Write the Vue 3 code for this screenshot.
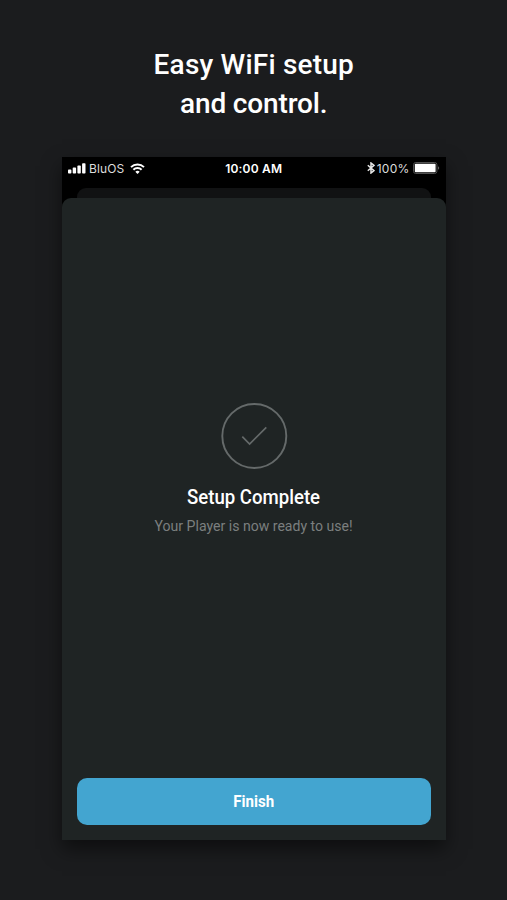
<script setup>
const signalBars = [
  { x: 0, h: 4 },
  { x: 4.7, h: 6 },
  { x: 9.4, h: 8 },
  { x: 14.1, h: 10.4 },
]
</script>

<template>
  <main class="page">
    <h1 class="headline">
      <span class="headline-top">Easy WiFi setup</span>
      <span class="headline-bottom">and control.</span>
    </h1>

    <section class="phone">
      <header class="status">
        <div class="status-side">
          <svg class="signal" width="18" height="11" viewBox="0 0 18 11" fill="#fff">
            <rect v-for="bar in signalBars" :key="bar.x" :x="bar.x" :y="10.6 - bar.h" width="3.4" :height="bar.h" rx="0.8" />
          </svg>
          <span class="carrier">BluOS</span>
          <svg class="wifi" width="15" height="11" viewBox="0 0 15 11" fill="none" stroke="#fff" stroke-width="2">
            <path d="M1 4.1a9.3 9.3 0 0 1 13 0" />
            <path d="M3.4 6.7a5.9 5.9 0 0 1 8.2 0" />
            <path d="M7.5 11 5.3 8.8a3.1 3.1 0 0 1 4.4 0z" fill="#fff" stroke="none" />
          </svg>
        </div>
        <span class="clock">10:00 AM</span>
        <div class="status-side right">
          <svg class="bluetooth" width="8" height="12" viewBox="0 0 8 12" fill="none" stroke="#e8e8e8" stroke-width="1.5">
            <path d="M0.8 3.3 7 8.6 4 11V1l3 2.4L0.8 8.7" />
          </svg>
          <span class="percent">100%</span>
          <svg class="battery" width="27" height="12" viewBox="0 0 27 12">
            <rect x="0.5" y="0.5" width="23.4" height="11" rx="2.2" fill="none" stroke="#505050" />
            <rect x="1.8" y="1.8" width="20.8" height="8.4" rx="0.8" fill="#fff" />
            <path d="M25 4.2c1.6.6 1.6 3 0 3.6z" fill="#606060" />
          </svg>
        </div>
      </header>

      <div class="back-sheet"></div>
      <div class="sheet">
        <div class="message">
          <svg class="check" width="66" height="66" viewBox="0 0 66 66" fill="none" stroke="#656a6a">
            <circle cx="33.3" cy="33" r="32" stroke-width="1.9" />
            <path d="m21.3 33.6 7.3 7.4L45.3 24.3" stroke-width="1.7" />
          </svg>
          <h2>Setup Complete</h2>
          <p>Your Player is now ready to use!</p>
        </div>
        <button class="finish" type="button"><span>Finish</span></button>
      </div>
    </section>
  </main>
</template>

<style>
body {
  background: #1b1c1e;
}
</style>

<style scoped>
.page {
  box-sizing: border-box;
  height: 900px;
  padding: 45px 61.5px 0 62px;
  overflow: hidden;
  background: #1b1c1e;
  font-family: Roboto, "Liberation Sans", sans-serif;
}
.headline {
  display: flex;
  flex-direction: column;
  align-items: center;
  height: 112px;
  margin: 0;
  color: #fff;
  font-size: 28px;
  line-height: 39px;
  font-weight: 500;
  white-space: nowrap;
}
.headline-top {
  letter-spacing: 0.2px;
}
.headline-bottom {
  letter-spacing: -0.15px;
}
.phone {
  display: flex;
  flex-direction: column;
  height: 683px;
  background: #000;
  box-shadow: 0 9px 18px rgba(0, 0, 0, 0.5);
}
.status {
  display: grid;
  grid-template-columns: 1fr auto 1fr;
  align-items: center;
  flex: none;
  height: 22px;
  margin-bottom: 9px;
  padding: 0 6px;
  color: #fff;
  font-family: Inter, "Liberation Sans", sans-serif;
  font-size: 12px;
}
.status-side {
  display: flex;
  align-items: center;
}
.right {
  justify-content: flex-end;
}
.carrier {
  margin: 0 6px 0 3px;
  color: #ddd;
  letter-spacing: 0.1px;
}
.clock {
  font-weight: 600;
  letter-spacing: 0.2px;
}
.percent {
  margin: 0 3px 0 2px;
  color: #ddd;
  letter-spacing: 0.25px;
}
.back-sheet {
  flex: none;
  height: 10px;
  margin: 0 15px;
  border-radius: 9px 9px 0 0;
  background: #111213;
}
.sheet {
  box-sizing: border-box;
  display: flex;
  flex: 1;
  flex-direction: column;
  justify-content: space-between;
  padding: 205px 15px 15px;
  border-radius: 9px 9px 0 0;
  background: #1f2424;
}
.message {
  display: flex;
  flex-direction: column;
  align-items: center;
  white-space: nowrap;
}
.check {
  display: block;
  overflow: visible;
}
h2 {
  margin: 15px 0 0;
  color: #fff;
  font-size: 20px;
  line-height: 26px;
  font-weight: 500;
  transform: scaleX(0.93);
}
p {
  margin: 5px 0 0;
  color: #7b7f7f;
  font-size: 15px;
  line-height: 22px;
  transform: scaleX(0.938);
}
.finish {
  height: 47px;
  padding: 0;
  border: 0;
  border-radius: 10px;
  background: #43a5d0;
  color: #fff;
  font: 700 16px/47px Roboto, "Liberation Sans", sans-serif;
}
.finish span {
  display: inline-block;
  transform: scaleX(0.94);
}
</style>
